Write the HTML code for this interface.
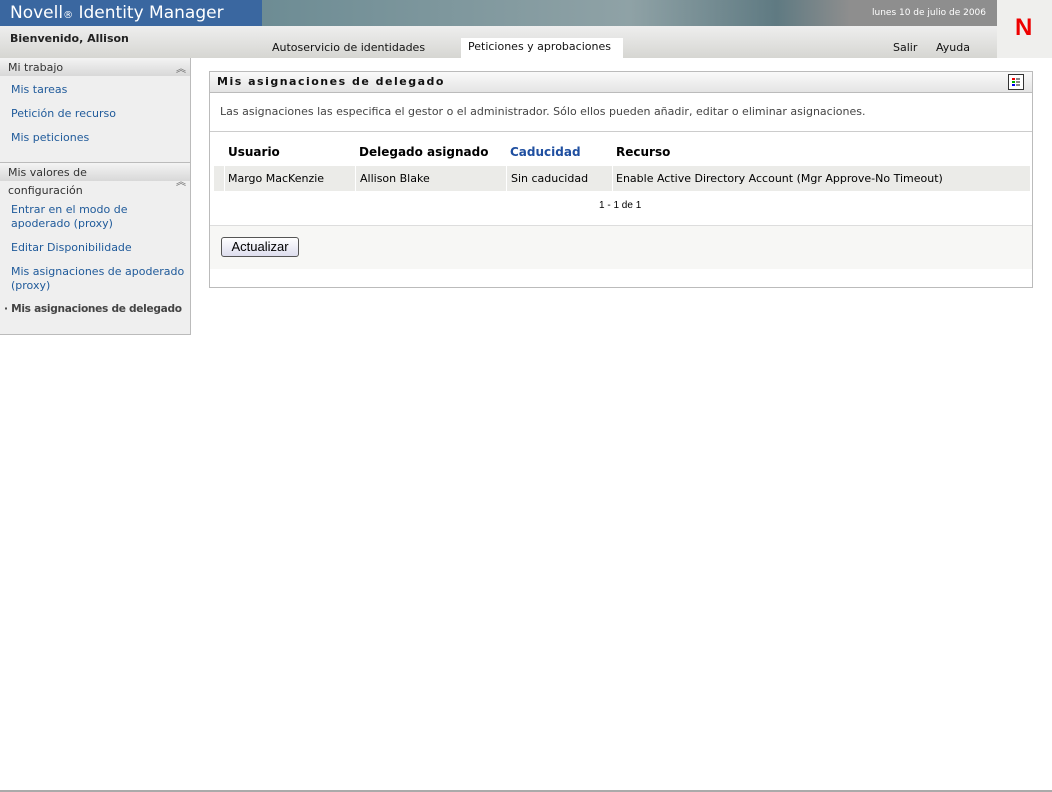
<!DOCTYPE html><html><head><meta charset="utf-8"><style>
body{margin:0;width:1052px;height:792px;background:#fff;font-family:"DejaVu Sans","Liberation Sans",sans-serif;font-size:11px;position:relative;overflow:hidden}
.a{position:absolute}
a{color:#1f5a9a;text-decoration:none}
</style></head><body>
<div class="a" style="left:0;top:0;width:262px;height:26px;background:#3a67a0"></div>
<div class="a" style="left:10px;top:3px;color:#fff;font-size:17px">Novell<span style="font-size:10px">®</span> Identity Manager</div>
<div class="a" style="left:262px;top:0;width:735px;height:26px;background:linear-gradient(90deg,#6d8c94,#8fa2a6 50%,#5f7a82 70%,#8e8e8e 80%,#8e8e8e)"></div>
<div class="a" style="left:872px;top:8px;color:#fff;font-size:9px">lunes 10 de julio de 2006</div>
<div class="a" style="left:997px;top:0;width:55px;height:58px;background:#efefed"></div>
<div class="a" style="left:1015px;top:14px;color:#e00;font-size:24px;font-weight:bold;font-family:'Liberation Sans',sans-serif">N</div>
<div class="a" style="left:0;top:26px;width:997px;height:32px;background:linear-gradient(#eee,#d6d6d2)"></div>
<div class="a" style="left:10px;top:32px;font-weight:bold;color:#222">Bienvenido, Allison</div>
<div class="a" style="left:272px;top:41px;color:#111">Autoservicio de identidades</div>
<div class="a" style="left:461px;top:38px;width:162px;height:20px;background:#fff"></div>
<div class="a" style="left:468px;top:40px;color:#111">Peticiones y aprobaciones</div>
<div class="a" style="left:893px;top:41px;color:#111">Salir</div>
<div class="a" style="left:936px;top:41px;color:#111">Ayuda</div>
<div class="a" style="left:0;top:58px;width:190px;height:276px;background:#efefef;border-right:1px solid #bbb;border-bottom:1px solid #bbb"></div>
<div class="a" style="left:0;top:58px;width:190px;height:18px;background:linear-gradient(#f4f4f4,#d8d8d8)"></div>
<div class="a" style="left:8px;top:61px;color:#333">Mi trabajo</div>
<div class="a" style="left:176px;top:60px;color:#666;font-size:10px">︽</div>
<a class="a" style="left:11px;top:83px">Mis tareas</a>
<a class="a" style="left:11px;top:107px">Petición de recurso</a>
<a class="a" style="left:11px;top:131px">Mis peticiones</a>
<div class="a" style="left:0;top:162px;width:190px;height:1px;background:#bbb"></div>
<div class="a" style="left:0;top:163px;width:190px;height:36px;background:linear-gradient(#f4f4f4,#d8d8d8 50%,#efefef 50%)"></div>
<div class="a" style="left:8px;top:164px;color:#333;line-height:18px">Mis valores de<br>configuración</div>
<div class="a" style="left:176px;top:173px;color:#666;font-size:10px">︽</div>
<a class="a" style="left:11px;top:203px;line-height:14px">Entrar en el modo de<br>apoderado (proxy)</a>
<a class="a" style="left:11px;top:241px">Editar Disponibilidade</a>
<a class="a" style="left:11px;top:265px;line-height:14px">Mis asignaciones de apoderado<br>(proxy)</a>
<div class="a" style="left:4px;top:303px;color:#444;font-weight:bold;letter-spacing:-0.3px;font-size:10.6px">· Mis asignaciones de delegado</div>
<div class="a" style="left:209px;top:71px;width:822px;height:215px;border:1px solid #bbb"></div>
<div class="a" style="left:210px;top:72px;width:822px;height:20px;background:linear-gradient(#fafafa,#e4e4e4);border-bottom:1px solid #bbb"></div>
<div class="a" style="left:217px;top:75px;font-weight:bold;letter-spacing:1.5px;color:#111">Mis asignaciones de delegado</div>
<div class="a" style="left:1008px;top:74px;width:14px;height:14px;border:1px solid #333;background:#fff">
<div class="a" style="left:3px;top:3px;width:3px;height:2px;background:#e00"></div><div class="a" style="left:7px;top:3px;width:4px;height:2px;background:#888"></div>
<div class="a" style="left:3px;top:6px;width:3px;height:2px;background:#0a0"></div><div class="a" style="left:7px;top:6px;width:4px;height:2px;background:#888"></div>
<div class="a" style="left:3px;top:9px;width:3px;height:2px;background:#00e"></div><div class="a" style="left:7px;top:9px;width:4px;height:2px;background:#888"></div></div>
<div class="a" style="left:220px;top:105px;color:#444">Las asignaciones las especifica el gestor o el administrador. Sólo ellos pueden añadir, editar o eliminar asignaciones.</div>
<div class="a" style="left:210px;top:131px;width:822px;height:1px;background:#ccc"></div>
<div class="a" style="left:228px;top:145px;font-weight:bold;font-size:12px">Usuario</div>
<div class="a" style="left:359px;top:145px;font-weight:bold;font-size:12px">Delegado asignado</div>
<div class="a" style="left:510px;top:145px;font-weight:bold;font-size:12px;color:#1f4fa0">Caducidad</div>
<div class="a" style="left:616px;top:145px;font-weight:bold;font-size:12px">Recurso</div>
<div class="a" style="left:214px;top:166px;width:816px;height:25px;background:#ebebe8"></div>
<div class="a" style="left:224px;top:166px;width:1px;height:25px;background:#fff"></div>
<div class="a" style="left:355px;top:166px;width:1px;height:25px;background:#fff"></div>
<div class="a" style="left:506px;top:166px;width:1px;height:25px;background:#fff"></div>
<div class="a" style="left:612px;top:166px;width:1px;height:25px;background:#fff"></div>
<div class="a" style="left:228px;top:172px">Margo MacKenzie</div>
<div class="a" style="left:360px;top:172px">Allison Blake</div>
<div class="a" style="left:511px;top:172px">Sin caducidad</div>
<div class="a" style="left:616px;top:172px">Enable Active Directory Account (Mgr Approve-No Timeout)</div>
<div class="a" style="left:599px;top:200px;font-size:10px;font-family:'Liberation Sans',sans-serif">1 - 1 de 1</div>
<div class="a" style="left:210px;top:225px;width:822px;height:43px;background:#f7f7f5;border-top:1px solid #ddd"></div>
<div class="a" style="left:221px;top:237px;width:76px;height:18px;border:1px solid #555;border-radius:3px;background:linear-gradient(#fff,#dde);font-family:'Liberation Sans',sans-serif;font-size:13px;text-align:center;line-height:18px">Actualizar</div>
<div class="a" style="left:0;top:790px;width:1052px;height:2px;background:#aaa"></div>
</body></html>
